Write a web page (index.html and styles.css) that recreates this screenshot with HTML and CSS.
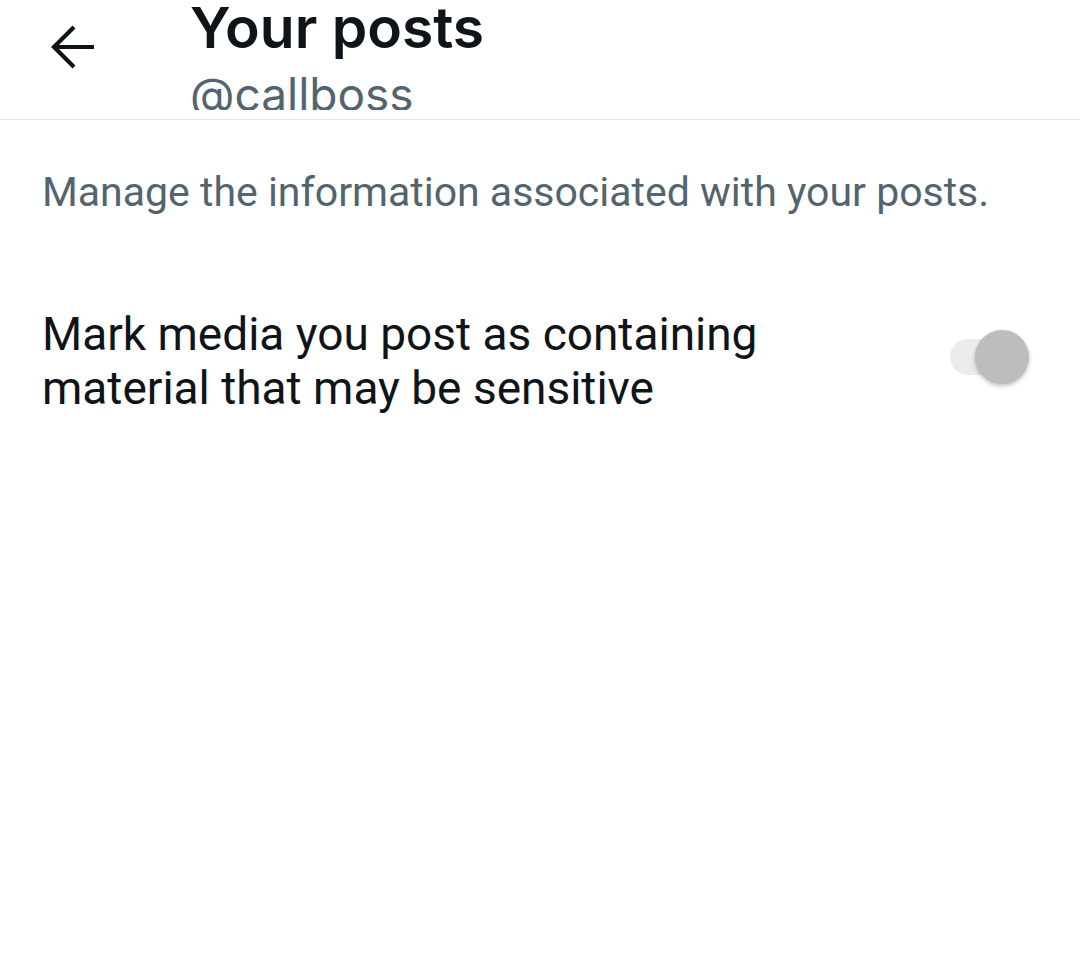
FILE: index.html
```html
<!DOCTYPE html>
<html lang="en">
<head>
  <meta charset="UTF-8">
  <meta name="viewport" content="width=device-width, initial-scale=1.0">
  <title>Your posts</title>
  <link rel="stylesheet" href="styles.css">
</head>
<body>
  <header class="topbar">
    <button class="back" aria-label="Back">
      <svg viewBox="0 0 48 48" width="48" height="48">
        <path d="M46 25H7M26 5L6 25l20 20" fill="none" stroke="#0f1419" stroke-width="4.2"/>
      </svg>
    </button>
    <div class="titles">
      <h1>Your posts</h1>
      <div class="handle">@callboss</div>
    </div>
  </header>

  <main class="content">
    <p class="intro">Manage the information associated with your posts.</p>

    <div class="setting">
      <div class="label">Mark media you post as containing material that may be sensitive</div>
      <div class="switch">
        <span class="track"></span>
        <span class="knob"></span>
      </div>
    </div>
  </main>
</body>
</html>
```

FILE: styles.css
```css
body {
  margin: 0;
  background: #fff;
  font-family: Roboto, "Noto Sans", sans-serif;
  color: #0f1419;
}
.topbar {
  display: flex;
  align-items: flex-start;
  height: 119px;
  border-bottom: 1px solid #e1e4e6;
}
.back {
  border: none;
  background: none;
  padding: 0;
  margin: 22px 0 0 48px;
  width: 48px;
  height: 48px;
  cursor: pointer;
}
.back svg { display: block; }
/* the handle is cut off just above the divider */
.titles {
  margin-left: 94px;
  height: 110px;
  overflow: hidden;
}
h1 {
  margin: -7px 0 0;
  font-family: Inter, Roboto, sans-serif;
  font-size: 57px;
  font-weight: 600;
  line-height: 70px;
  color: #0f1419;
}
.handle {
  margin-top: 3px;
  font-family: Inter, Roboto, sans-serif;
  font-size: 46px;
  line-height: 56px;
  color: #536471;
}
.content {
  padding: 0 42px;
}
.intro {
  margin: 0;
  padding-top: 48px;
  font-size: 41px;
  line-height: 48px;
  color: #536471;
}
.setting {
  display: flex;
  align-items: flex-start;
  justify-content: space-between;
  margin-top: 91px;
}
.label {
  width: 780px;
  font-size: 46px;
  line-height: 54px;
  color: #0f1419;
}
.switch {
  position: relative;
  width: 86px;
  height: 56px;
  margin: 22px 5px 0 0;
}
.track {
  position: absolute;
  left: 3px;
  top: 10px;
  width: 56px;
  height: 36px;
  border-radius: 18px;
  background: #ececec;
}
.knob {
  position: absolute;
  right: 4px;
  top: 1px;
  width: 54px;
  height: 54px;
  border-radius: 50%;
  background: #bdbdbd;
  box-shadow: 0 2px 4px rgba(0, 0, 0, 0.25);
}
```
